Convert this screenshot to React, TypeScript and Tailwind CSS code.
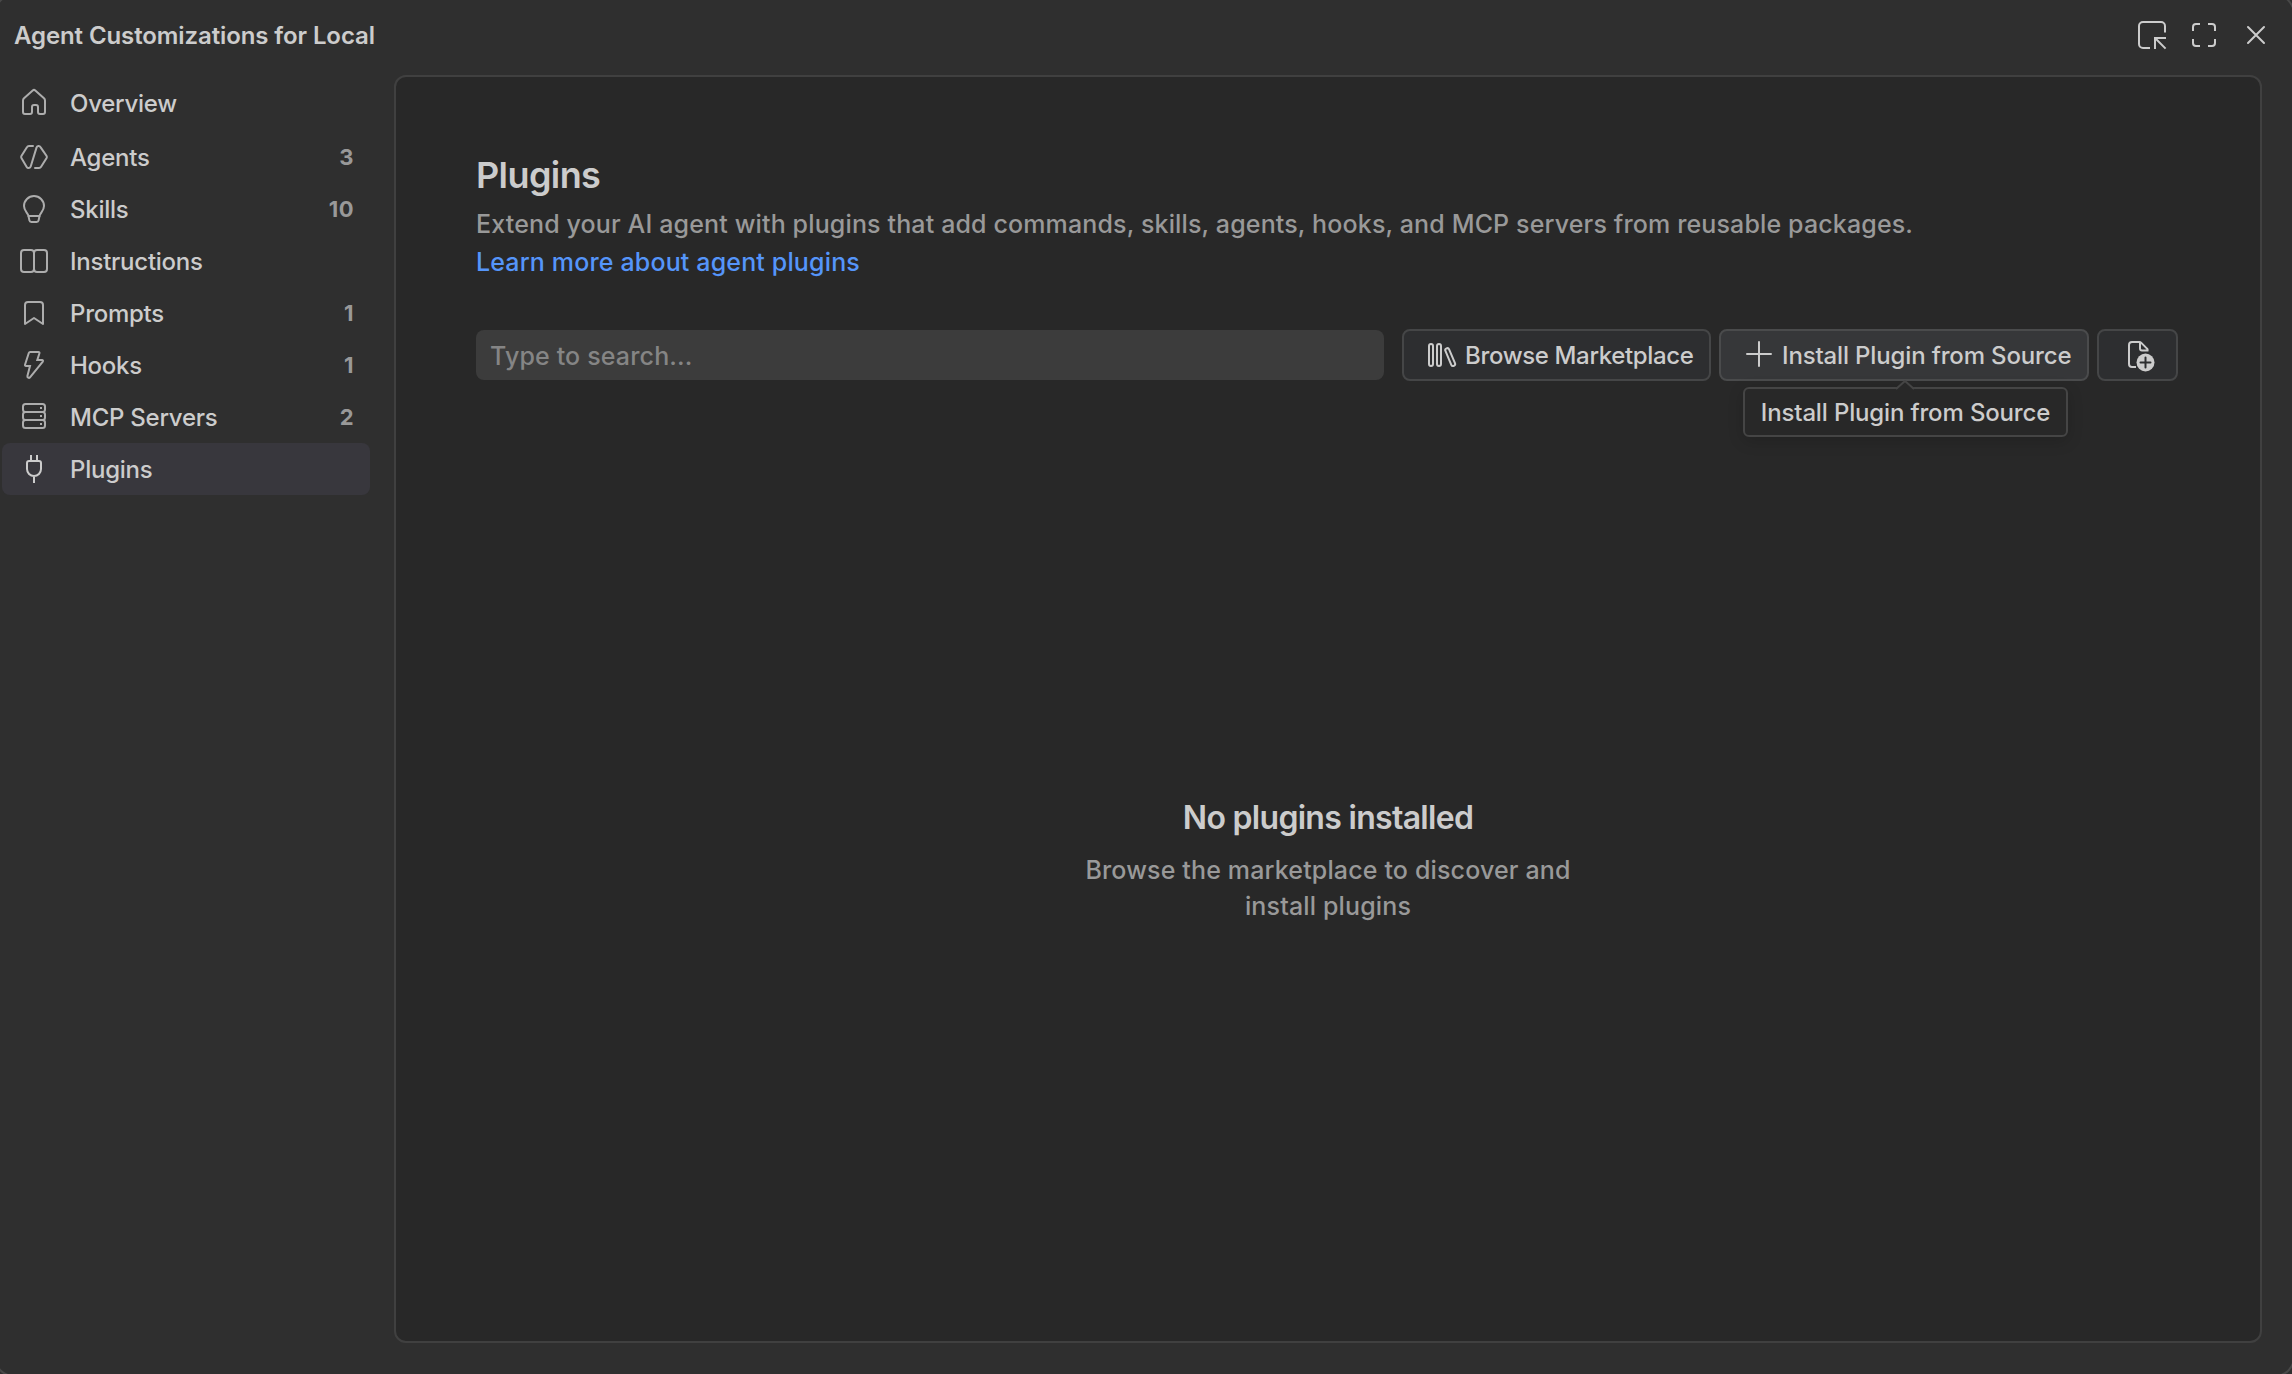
import { useState } from "react";
import type { ReactNode } from "react";

type IconProps = { children: ReactNode; className?: string };

function Icon({ children, className = "" }: IconProps) {
  return (
    <svg
      viewBox="0 0 32 32"
      fill="none"
      stroke="currentColor"
      strokeWidth={2}
      className={`size-8 shrink-0 ${className}`}
    >
      {children}
    </svg>
  );
}

const icons = {
  home: (
    <path d="M5 13.4a3 3 0 0 1 1-2.2l8.7-7.8a2 2 0 0 1 2.6 0l8.7 7.8a3 3 0 0 1 1 2.2V25a2 2 0 0 1-2 2h-3a2 2 0 0 1-2-2v-5a2 2 0 0 0-2-2h-2a2 2 0 0 0-2 2v5a2 2 0 0 1-2 2H7a2 2 0 0 1-2-2z" />
  ),
  agent: (
    <path
      strokeLinecap="round"
      d="M15 5h-4a2.4 2.4 0 0 0-2.1 1.2L3.4 15a2 2 0 0 0 0 2l5.3 9a2.2 2.2 0 0 0 4-.5l5.8-18.9a2.2 2.2 0 0 1 4-.5L28.6 15a2 2 0 0 1 0 2l-5.5 8.8A2.4 2.4 0 0 1 21 27h-4"
    />
  ),
  bulb: (
    <>
      <path d="M10.5 23C10 20 6 18 6 13a10 10 0 0 1 20 0c0 5-4 7-4.5 10z" />
      <path d="M10.5 23l.9 4.4a2 2 0 0 0 2 1.6h5.2a2 2 0 0 0 2-1.6l.9-4.4" />
    </>
  ),
  book: (
    <path d="M16 8a3 3 0 0 0-3-3H6a3 3 0 0 0-3 3v16a3 3 0 0 0 3 3h7a3 3 0 0 0 3-3zM16 8a3 3 0 0 1 3-3h7a3 3 0 0 1 3 3v16a3 3 0 0 1-3 3h-7a3 3 0 0 1-3-3" />
  ),
  bookmark: <path strokeLinejoin="round" d="M7 8a3 3 0 0 1 3-3h12a3 3 0 0 1 3 3v19l-9-6-9 6z" />,
  bolt: (
    <path d="M12.2 3h8.3a1 1 0 0 1 .95 1.3L19.3 11H24a1 1 0 0 1 .8 1.6L12 28.3a1.5 1.5 0 0 1-2.6-1.3L12 17H8a1 1 0 0 1-1-1.3L10.8 4a1.5 1.5 0 0 1 1.4-1z" />
  ),
  server: (
    <>
      <rect x="5" y="3" width="22" height="8" rx="2.5" />
      <rect x="5" y="11" width="22" height="8" rx="2.5" />
      <rect x="5" y="19" width="22" height="8" rx="2.5" />
      <path d="M22 7h2M22 15h2M22 23h2" />
    </>
  ),
  plug: (
    <path d="M9 10a2 2 0 0 1 2-2h10a2 2 0 0 1 2 2v6a7 7 0 0 1-14 0zM13 2v6M19 2v6M16 23v7" />
  ),
  openInWindow: (
    <path d="M29 13.5V7a4 4 0 0 0-4-4H7a4 4 0 0 0-4 4v18a4 4 0 0 0 4 4h7M30 19H19v11M19 19l10.6 10.6" />
  ),
  fullscreen: (
    <path d="M12 5H8a3 3 0 0 0-3 3v4M20 5h4a3 3 0 0 1 3 3v4M27 20v4a3 3 0 0 1-3 3h-4M12 27H8a3 3 0 0 1-3-3v-4" />
  ),
  close: <path strokeLinecap="round" d="M8 8l16 16M24 8L8 24" />,
  library: (
    <>
      <rect x="3" y="5" width="4" height="22" rx="2" />
      <rect x="11" y="5" width="4" height="22" rx="2" />
      <rect x="22.2" y="8.6" width="4" height="19" rx="2" transform="rotate(-23 24.2 18.1)" />
    </>
  ),
  add: <path strokeLinecap="round" d="M4 15h24M16 3v24" />,
  newFile: (
    <>
      <path d="M14 28H10a3 3 0 0 1-3-3V6a3 3 0 0 1 3-3h7.2a3 3 0 0 1 2.1.9L25 9.6a2 2 0 0 1 .6 1.9H20a2 2 0 0 1-2-2V3" />
      <circle cx="23.5" cy="23.5" r="9" fill="currentColor" stroke="none" />
      <path className="stroke-[#2d2e30]" strokeLinecap="round" d="M18.5 23.5h10M23.5 18.5v10" />
    </>
  ),
};

const navItems: { id: string; label: string; icon: ReactNode; count?: number }[] = [
  { id: "overview", label: "Overview", icon: icons.home },
  { id: "agents", label: "Agents", icon: icons.agent, count: 3 },
  { id: "skills", label: "Skills", icon: icons.bulb, count: 10 },
  { id: "instructions", label: "Instructions", icon: icons.book },
  { id: "prompts", label: "Prompts", icon: icons.bookmark, count: 1 },
  { id: "hooks", label: "Hooks", icon: icons.bolt, count: 1 },
  { id: "mcp", label: "MCP Servers", icon: icons.server, count: 2 },
  { id: "plugins", label: "Plugins", icon: icons.plug },
];

function Sidebar() {
  const [active, setActive] = useState("plugins");

  return (
    <nav className="flex w-[394px] shrink-0 flex-col pt-0.5 pr-6 pl-0.5">
      {navItems.map((item) => (
        <button
          key={item.id}
          onClick={() => setActive(item.id)}
          className={`flex h-[52px] shrink-0 items-center rounded-lg px-4 text-left first:mb-0.5 ${
            active === item.id ? "bg-[#38373d]" : ""
          }`}
        >
          <Icon className={active === item.id ? "text-[#cccccc]" : "text-[#adadad]"}>{item.icon}</Icon>
          <span className="ml-5 flex-1 pt-0.5 text-2xl tracking-[-0.25px]">{item.label}</span>
          {item.count !== undefined && (
            <span className="text-[22px] font-bold tracking-[0.5px] text-[#999999]">{item.count}</span>
          )}
        </button>
      ))}
    </nav>
  );
}

function Toolbar() {
  const [query, setQuery] = useState("");

  return (
    <div className="mt-12 flex h-[52px] items-center text-2xl tracking-[-0.15px]">
      <input
        value={query}
        onChange={(e) => setQuery(e.target.value)}
        placeholder="Type to search..."
        className="h-[50px] w-[908px] rounded-lg bg-[#3c3c3c] px-3.5 pt-0.5 text-[25px] tracking-[0.15px] outline-none placeholder:text-[#858585]"
      />
      <button className="ml-[18px] flex h-[52px] w-[309px] items-center rounded-lg border-2 border-[#454647] bg-[#2d2e30] pl-[22px]">
        <Icon>{icons.library}</Icon>
        <span className="ml-[7px] pt-0.5 tracking-[-0.35px] whitespace-nowrap">Browse Marketplace</span>
      </button>
      <div className="relative ml-2">
        <button className="flex h-[52px] w-[370px] items-center rounded-lg border-2 border-[#4a4b4c] bg-[#363739] pl-[22px]">
          <Icon>{icons.add}</Icon>
          <span className="ml-[7px] pt-0.5 whitespace-nowrap">Install Plugin from Source</span>
        </button>
        <div className="absolute top-[58px] left-6 flex h-[50px] w-[325px] items-center justify-center rounded-md border-2 border-[#454545] bg-[#282828] pt-0.5 whitespace-nowrap shadow-[0_4px_16px_rgba(0,0,0,0.16)]">
          Install Plugin from Source
          <svg viewBox="0 0 20 10" className="absolute -top-[9px] left-[150px] h-2.5 w-5">
            <path d="M1 10L10 1l9 9z" fill="#282828" />
            <path d="M1 9L10 1l9 8" fill="none" stroke="#454545" strokeWidth={2} />
          </svg>
        </div>
      </div>
      <button className="ml-2 flex h-[52px] w-[81px] items-center justify-center rounded-lg border-2 border-[#454647] bg-[#2d2e30]">
        <Icon className="overflow-visible">{icons.newFile}</Icon>
      </button>
    </div>
  );
}

export default function App() {
  return (
    <div className="relative flex h-[1374px] w-[2292px] flex-col overflow-hidden bg-[#2f2f2f] font-['Inter',sans-serif] text-[25px] leading-9 font-[450] text-[#cccccc]">
      <header className="flex h-[75px] shrink-0 items-center justify-between pr-5 pb-[5px] pl-3.5">
        <h1 className="pt-0.5 text-2xl font-semibold tracking-[-0.1px]">Agent Customizations for Local</h1>
        <div className="flex gap-5">
          <Icon>{icons.openInWindow}</Icon>
          <Icon>{icons.fullscreen}</Icon>
          <Icon>{icons.close}</Icon>
        </div>
      </header>

      <div className="flex h-[1268px]">
        <Sidebar />
        <main className="flex w-[1868px] flex-col rounded-xl border-2 border-[#404040] bg-[#282828] px-20 pt-[74px]">
          <h2 className="text-4xl leading-[48px] font-semibold tracking-[-0.6px]">Plugins</h2>
          <p className="mt-[6px] leading-[38px] tracking-[0.14px] text-[#999999]">
            Extend your AI agent with plugins that add commands, skills, agents, hooks, and MCP servers from reusable packages.
          </p>
          <a href="#" className="self-start leading-[38px] tracking-[0.15px] text-[#5595fa]">
            Learn more about agent plugins
          </a>

          <Toolbar />

          <div className="mt-[413px] flex flex-col items-center">
            <h3 className="text-[32px] leading-[48px] font-semibold tracking-[-0.7px]">No plugins installed</h3>
            <p className="mt-2.5 w-[500px] text-center leading-[36.4px] tracking-[0.15px] text-[#999999]">
              Browse the marketplace to discover and install plugins
            </p>
          </div>
        </main>
      </div>

      {/* rounded edge of the modal */}
      <div className="pointer-events-none absolute -top-[6px] -right-[3px] -bottom-[3px] -left-[6px] rounded-[20px] border-2 border-[#484848]" />
    </div>
  );
}
